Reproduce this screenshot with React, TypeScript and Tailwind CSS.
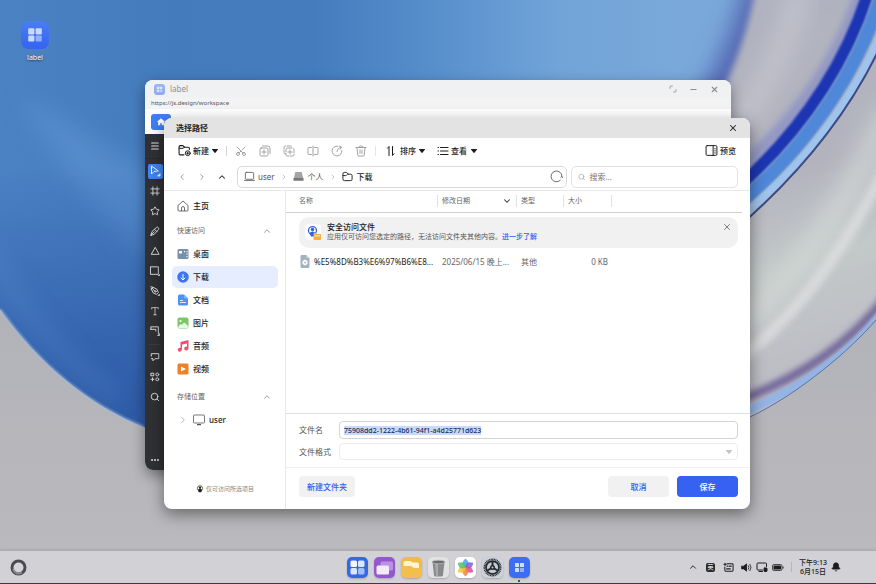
import { useEffect, useRef, type ReactNode } from "react";
import {
  Bell,
  ChevronDown,
  ChevronLeft,
  ChevronRight,
  ChevronUp,
  Ellipsis,
  Hash,
  Menu,
  Minus,
  Scissors,
  Search,
  Star,
  Triangle,
  X,
} from "lucide-react";

type GlyphProps = { children: ReactNode; className?: string };

/* Line icon on a 24 unit grid */
function Line({ children, className = "size-3" }: GlyphProps) {
  return (
    <svg
      viewBox="0 0 24 24"
      fill="none"
      stroke="currentColor"
      strokeWidth="1.8"
      strokeLinecap="round"
      strokeLinejoin="round"
      className={`shrink-0 ${className}`}
      aria-hidden="true"
    >
      {children}
    </svg>
  );
}

function Caret({ className = "text-[#1c1c1c]" }: { className?: string }) {
  return (
    <svg viewBox="0 0 12 8" className={`h-1 w-1.5 shrink-0 ${className}`} aria-hidden="true">
      <path d="M1 0h10c1 0 1.200.8.7 1.500L6.800 7.400c-.5.6-1.100.6-1.600 0L.3 1.500C-.2.8 0 0 1 0z" fill="currentColor" />
    </svg>
  );
}

function FourSquares({ className }: { className: string }) {
  return (
    <svg viewBox="0 0 28 28" className={className} aria-hidden="true">
      <defs>
        <linearGradient id="tile" x1="0" y1="0" x2="0" y2="1">
          <stop offset="0" stopColor="#4a7ef2" />
          <stop offset="1" stopColor="#3463f2" />
        </linearGradient>
      </defs>
      <rect width="28" height="28" rx="7.500" fill="url(#tile)" />
      <rect x="7.200" y="7.200" width="6.200" height="6.200" rx="1" fill="#c9dafd" />
      <rect x="14.600" y="7.200" width="6.200" height="6.200" rx="1" fill="#c9dafd" />
      <rect x="7.200" y="14.400" width="6.200" height="6.200" rx="1" fill="#c9dafd" />
      <rect x="14.600" y="14.400" width="6.200" height="6.200" rx="1" fill="#8fb0fa" />
    </svg>
  );
}

function Wallpaper() {
  return (
    <svg
      viewBox="0 0 876 584"
      preserveAspectRatio="none"
      className="absolute inset-0 size-full"
      aria-hidden="true"
    >
      <defs>
        <linearGradient id="floor" x1="0" y1="0" x2="0" y2="1">
          <stop offset="0.55" stopColor="#b2b3b9" />
          <stop offset="1" stopColor="#bbbabd" />
        </linearGradient>
        <linearGradient id="disc" x1="0" y1="0" x2="1" y2="0">
          <stop offset="0" stopColor="#4b82c4" />
          <stop offset="0.2" stopColor="#447bbc" />
          <stop offset="0.36" stopColor="#447cbe" />
          <stop offset="0.5" stopColor="#5890cd" />
          <stop offset="0.64" stopColor="#72a4d8" />
          <stop offset="0.78" stopColor="#7aa8da" />
        </linearGradient>
        <linearGradient id="shade" x1="0" y1="0" x2="0" y2="1">
          <stop offset="0" stopColor="#274fa4" stopOpacity="0" />
          <stop offset="0.75" stopColor="#27509f" stopOpacity="0.75" />
          <stop offset="1" stopColor="#27509f" stopOpacity="0.85" />
        </linearGradient>
        <linearGradient id="silver" gradientUnits="userSpaceOnUse" x1="740" y1="0" x2="850" y2="380">
          <stop offset="0" stopColor="#b0b3bf" />
          <stop offset="0.45" stopColor="#b3b3be" />
          <stop offset="0.68" stopColor="#c3c8c8" />
          <stop offset="1" stopColor="#bcbbc4" />
        </linearGradient>
        <clipPath id="discClip">
          <path d="M0 309C40 365 90 405 144 427L300 480H600L750 417C800 393 850 350 876 320V0H0Z" />
        </clipPath>
        <filter id="soft3" x="-20%" y="-20%" width="140%" height="140%">
          <feGaussianBlur stdDeviation="3" />
        </filter>
        <filter id="soft12" x="-30%" y="-30%" width="160%" height="160%">
          <feGaussianBlur stdDeviation="11" />
        </filter>
        <filter id="soft1" x="-10%" y="-10%" width="120%" height="120%">
          <feGaussianBlur stdDeviation="1" />
        </filter>
      </defs>
      <rect width="876" height="584" fill="url(#floor)" />
      <g clipPath="url(#discClip)">
        <rect width="876" height="584" fill="url(#disc)" />
        <path d="M20 100C60 170 110 230 160 270V180C110 150 60 110 20 100Z" fill="#6097d6" opacity="0.5" filter="url(#soft12)" />
        <rect y="170" width="500" height="310" fill="url(#shade)" />
        <path d="M-10 250C20 310 60 360 120 400" stroke="#5f93d6" strokeWidth="14" fill="none" opacity="0.35" filter="url(#soft12)" />
        <path d="M745 -20C735 30 712 80 670 140L750 440L900 330V-20Z" fill="#5466b2" filter="url(#soft12)" />
        <path d="M757 -20C747 40 727 90 700 130V480H900V-20Z" fill="url(#silver)" filter="url(#soft3)" />
        <path d="M800 -10C790 40 765 90 735 130" stroke="#c6c6d0" strokeWidth="22" fill="none" opacity="0.8" filter="url(#soft12)" />
        <path d="M740 325C800 275 850 200 890 110" stroke="#d6dcd8" strokeWidth="24" fill="none" opacity="0.7" filter="url(#soft12)" />
        <path d="M740 358C800 315 850 240 890 160" stroke="#e6e6e6" strokeWidth="12" fill="none" opacity="0.6" filter="url(#soft3)" />
        <path d="M862 -10C844 50 803 116 735 174" stroke="#7f86c8" strokeWidth="14" fill="none" opacity="0.6" filter="url(#soft3)" />
        <path d="M869 -10C851 50 811 124 735 190" stroke="#1d35b2" strokeWidth="12" fill="none" filter="url(#soft1)" />
        <path d="M883 -10C864 55 819 138 735 207" stroke="#4f88d8" strokeWidth="14" fill="none" filter="url(#soft1)" />
        <path d="M893 2C870 70 825 148 735 222" stroke="#9dc5f0" strokeWidth="7" fill="none" filter="url(#soft1)" />
        <path d="M897 6C873 74 828 150 735 230" stroke="#3a4a88" strokeWidth="2" fill="none" />
        <path d="M890 292C850 345 800 378 735 402" stroke="#6c5f97" strokeWidth="8" fill="none" filter="url(#soft3)" />
        <path d="M886 308C850 356 800 388 740 414" stroke="#93b4e4" strokeWidth="8" fill="none" filter="url(#soft1)" />
      </g>
      <path d="M0 309C40 365 90 405 144 427" stroke="#9dbbe0" strokeWidth="2" fill="none" opacity="0.8" filter="url(#soft1)" />
      <path d="M750 417C800 393 850 350 876 320" stroke="#5b74a8" strokeWidth="1" fill="none" />
    </svg>
  );
}

function RailButton({ label, active, children }: { label: string; active?: boolean; children: ReactNode }) {
  return (
    <button
      type="button"
      aria-label={label}
      className="flex h-5 w-5 shrink-0 items-center justify-center text-[#e6e6e6]"
    >
      <span
        className={`flex size-[15px] items-center justify-center rounded-[2px] ${active ? "bg-[#3f86f5] text-white" : ""}`}
      >
        {children}
      </span>
    </button>
  );
}

function EditorWindow() {
  return (
    <section className="absolute top-20 left-[145px] flex h-[390px] w-[586px] flex-col overflow-hidden rounded-lg bg-white shadow-[0_5px_14px_rgba(0,0,0,0.4)]">
      <header className="flex h-[18px] shrink-0 items-center bg-[#f0f1f3] pr-3 pl-[9px] text-[#8e8e90]">
        <FourSquares className="mr-[5px] size-[11px] opacity-50" />
        <span className="flex-1 text-[8px] leading-[10px]">label</span>
        <button type="button" aria-label="还原" className="mr-3">
          <Line className="size-2">
            <path d="M3 10V6q0-3 3-3h4M21 14v4q0 3-3 3h-4" strokeWidth="2.500" />
          </Line>
        </button>
        <button type="button" aria-label="最小化" className="mr-3">
          <Minus className="size-[9px]" strokeWidth={3} />
        </button>
        <button type="button" aria-label="关闭">
          <X className="size-[9px]" strokeWidth={3} />
        </button>
      </header>
      <p className="h-[11px] shrink-0 bg-[#f3f3f3] pl-1.5 text-[6px] leading-[11px] text-[#555]">
        https://js.design/workspace
      </p>
      <div className="h-[25px] shrink-0 px-1.5 py-[5px]">
        <button
          type="button"
          aria-label="首页"
          className="flex h-4 w-5 items-center justify-center rounded-[3px] bg-[#3f7dfb]"
        >
          <svg viewBox="0 0 24 24" className="size-2.5" aria-hidden="true">
            <path d="M12 3L2 12h3v8h5v-5h4v5h5v-8h3z" fill="#fff" />
          </svg>
        </button>
      </div>
      <nav aria-label="工具" className="flex w-5 flex-1 flex-col items-center bg-[#303134] pt-0.5">
        <RailButton label="菜单"><Menu className="size-2.5" strokeWidth={2.500} /></RailButton>
        <hr className="mt-0.5 mb-0.5 w-full border-[#292a2c]" />
        <RailButton label="选择" active>
          <Line className="size-3">
            <path d="M5 3v15l5-5 8-1z" />
            <path d="M18 22h4v-4z" fill="currentColor" />
          </Line>
        </RailButton>
        <RailButton label="画板">
          <Line className="size-2.5"><path d="M7 2v20M17 2v20M2 7h20M2 17h20" strokeWidth="2" /></Line>
        </RailButton>
        <RailButton label="组件"><Star className="size-2.5" strokeWidth={2.200} /></RailButton>
        <RailButton label="画笔">
          <Line className="size-2.5">
            <path d="M2 22l3-9L15 4q3-3 5 0t0 5L11 19zM11 8l6 6M2 22l8-8" strokeWidth="2.200" />
          </Line>
        </RailButton>
        <RailButton label="三角形">
          <Line className="size-2.5"><path d="M12 4L3 20h18z" strokeWidth="2.200" strokeLinejoin="miter" /></Line>
        </RailButton>
        <RailButton label="矩形">
          <Line className="size-2.5">
            <rect x="2" y="2" width="18" height="18" strokeWidth="2.200" />
            <path d="M20 24h3v-3z" fill="currentColor" />
          </Line>
        </RailButton>
        <RailButton label="钢笔">
          <Line className="size-2.5">
            <path d="M2 2l5 1M3 7l4-4 10 5 3 8-4 4-8-3L3 7M5 5l7 8" strokeWidth="2.200" />
            <circle cx="13" cy="13" r="2" />
            <path d="M20 23h3v-3z" fill="currentColor" />
          </Line>
        </RailButton>
        <RailButton label="文本">
          <Line className="size-2.5"><path d="M4 7V4h16v3M12 4v17M9 21h6" /></Line>
        </RailButton>
        <RailButton label="切片">
          <Line className="size-2.5">
            <path d="M2 8V2h18v16M2 8h12v4" strokeWidth="2.200" />
            <path d="M19 23h4v-4z" fill="currentColor" />
          </Line>
        </RailButton>
        <hr className="mt-[3px] mb-0.5 w-3 border-[#3c3d40]" />
        <RailButton label="评论">
          <Line className="size-2.5"><path d="M3 10V4h18v12h-9l-5 5v-5H3" strokeWidth="2.200" /></Line>
        </RailButton>
        <RailButton label="插件">
          <Line className="size-2.5">
            <path d="M3 3h6v6H3zM6 14v7M2.500 17.500h7" strokeWidth="2.200" />
            <circle cx="17.500" cy="6" r="3.500" strokeWidth="2.200" />
            <circle cx="17.500" cy="17.500" r="3.500" strokeWidth="2.200" />
          </Line>
        </RailButton>
        <RailButton label="查找"><Search className="size-2.5" strokeWidth={2.200} /></RailButton>
        <div className="mt-auto">
          <RailButton label="更多"><Ellipsis className="size-2.5" strokeWidth={3} /></RailButton>
        </div>
      </nav>
    </section>
  );
}

function ToolIcon({ label, children }: { label: string; children: ReactNode }) {
  return (
    <button type="button" aria-label={label} className="flex w-3 items-center justify-center text-[#999]">
      {children}
    </button>
  );
}

function Toolbar() {
  return (
    <div className="flex h-[25px] items-center px-3.5 text-[8px] leading-[10px] font-medium text-[#1c1c1c]">
      <button type="button" className="flex items-center">
        <Line className="mr-0.5 size-[13px]">
          <path d="M11 20H4q-2 0-2-2V5q0-2 2-2h5l3 3h7q2 0 2 2v2" strokeWidth="2" />
          <path d="M2 8h7l3-2" />
          <circle cx="18" cy="17" r="4.500" />
          <path d="M18 15v4M16 17h4" />
        </Line>
        新建
        <Caret className="ml-[3px]" />
      </button>
      <span className="mx-2 h-2.5 w-px bg-[#d4d4d4]" />
      <div className="flex items-center gap-3">
        <ToolIcon label="剪切"><Scissors className="size-3 -rotate-90" strokeWidth={1.800} /></ToolIcon>
        <ToolIcon label="复制">
          <Line>
            <rect x="2" y="6" width="16" height="16" rx="2.500" />
            <path d="M7 2h11q4 0 4 4v11M10 10v8M6 14h8" />
          </Line>
        </ToolIcon>
        <ToolIcon label="粘贴">
          <Line>
            <path d="M5 18q-3 0-3-3V5q0-3 3-3h10q3 0 3 3" strokeDasharray="8 3" />
            <rect x="6" y="6" width="16" height="16" rx="3" strokeDasharray="9 3" />
            <path d="M14 10v8M10 14h8" />
          </Line>
        </ToolIcon>
        <ToolIcon label="重命名">
          <Line><path d="M9 5H3.500Q2 5 2 7v10q0 2 1.500 2H9M15 5h5.500Q22 5 22 7v10q0 2-1.500 2H15M12 2v20" /></Line>
        </ToolIcon>
        <ToolIcon label="分享">
          <Line><path d="M14 2.400A9.800 9.800 0 1 0 21.800 11M12 13c1-5 4-8 8-8.500M17 2l4 2.500-2.500 4" /></Line>
        </ToolIcon>
        <ToolIcon label="删除">
          <Line><path d="M2 5h20M8 5q0-3 2-3h4q2 0 2 3M4 5l1.500 15q.2 2 2 2h9q1.800 0 2-2L20 5M10 10v7M14 10v7" /></Line>
        </ToolIcon>
      </div>
      <span className="mx-2 h-2.5 w-px bg-[#e6e6e6]" />
      <button type="button" className="mr-3 flex items-center">
        <Line className="mr-[3px] ml-px size-3">
          <path d="M8 21V3L5 6.500M15 3v18l3-3.500" strokeWidth="2" />
        </Line>
        排序
        <Caret className="ml-[3px]" />
      </button>
      <button type="button" className="flex items-center">
        <Line className="mr-0.5 size-3">
          <path d="M7 5h15M7 12h15M7 19h15M2 5h1M2 12h1M2 19h1" strokeWidth="2" />
        </Line>
        查看
        <Caret className="ml-1" />
      </button>
      <button type="button" className="ml-auto flex items-center">
        <Line className="mr-0.5 size-[13px]">
          <rect x="2" y="3" width="20" height="18" rx="2" />
          <path d="M15 3v18M18.500 8v1M18.500 12v1M18.500 16v1" />
        </Line>
        预览
      </button>
    </div>
  );
}

function AddressRow() {
  return (
    <div className="flex h-[27px] items-center pr-3 pl-[13px] text-[8px] leading-[10px] text-[#555]">
      <button type="button" aria-label="后退" className="mr-2.5"><ChevronLeft className="size-2.5 text-[#8b8b8b]" strokeWidth={2} /></button>
      <button type="button" aria-label="前进" className="mr-2.5"><ChevronRight className="size-2.5 text-[#8b8b8b]" strokeWidth={2} /></button>
      <button type="button" aria-label="上一级" className="mr-2.5"><ChevronUp className="size-2.5 text-[#222]" strokeWidth={2.500} /></button>
      <div className="mr-1 flex h-[22px] flex-1 items-center rounded-[5px] border border-[#d9d9d9] pr-[3px] pl-1.5">
        <button type="button" className="flex items-center gap-[3px]">
          <Line className="size-[11px]">
            <rect x="3" y="3" width="18" height="15" rx="2" />
            <path d="M1 20.500h22" />
          </Line>
          user
        </button>
        <ChevronRight className="mx-[5px] size-2 text-[#aaa]" strokeWidth={2} />
        <button type="button" className="flex items-center gap-1">
          <svg viewBox="0 0 24 24" className="size-[11px]" aria-hidden="true">
            <path d="M5 2h14l3 13H2z" fill="#a4a4a4" />
            <path d="M1 15h22v5q0 1-1 1H2q-1 0-1-1z" fill="#777" />
          </svg>
          个人
        </button>
        <ChevronRight className="mx-[5px] size-2 text-[#aaa]" strokeWidth={2} />
        <button type="button" className="flex items-center gap-1 font-medium text-[#1c1c1c]">
          <Line className="size-[11px]">
            <path d="M2 6q0-3 3-3h5l4 4h5q3 0 3 3v8q0 3-3 3H5q-3 0-3-3zM2 10h6q2 0 3-2l1-1h2" strokeWidth="2" />
          </Line>
          下载
        </button>
        <button type="button" aria-label="刷新" className="ml-auto text-[#555]">
          <Line className="size-[13px]">
            <path d="M19 19a10 10 0 1 1 3-7l-2 1.500M22 12l1.500 2" strokeWidth="1.600" />
          </Line>
        </button>
      </div>
      <label className="flex h-[22px] w-[167px] items-center rounded-[5px] border border-[#e3e3e3] px-1.5">
        <Search className="mr-1 size-2 text-[#999]" strokeWidth={2} />
        <input
          type="search"
          aria-label="搜索"
          placeholder="搜索..."
          className="w-full min-w-0 bg-transparent outline-none placeholder:text-[#777]"
        />
      </label>
    </div>
  );
}

function Place({ label, active, children }: { label: string; active?: boolean; children: ReactNode }) {
  return (
    <a
      href="#"
      className={`flex h-[22px] items-center gap-1 rounded-[5px] pl-[5px] font-medium text-[#1c1c1c] ${active ? "bg-[#e6edfe]" : ""}`}
    >
      <svg viewBox="0 0 24 24" className="size-3 shrink-0" fill="none" aria-hidden="true">
        {children}
      </svg>
      {label}
    </a>
  );
}

function GroupTitle({ children }: { children: ReactNode }) {
  return (
    <button type="button" className="flex h-[22px] items-center justify-between pr-1.5 pl-[5px] text-[7px] text-[#666]">
      {children}
      <ChevronUp className="size-2.5 text-[#888]" strokeWidth={2} />
    </button>
  );
}

function Places() {
  return (
    <nav
      aria-label="位置"
      className="flex w-[122px] shrink-0 flex-col border-r border-[#e8e8e8] pt-1 pr-[7px] pb-[15px] pl-2 text-[8px] leading-[10px]"
    >
      <Place label="主页">
        <path d="M2 11l10-9 10 9v9q0 2-2 2H4q-2 0-2-2zM9 22v-6q0-3 3-3t3 3v6" stroke="#555" strokeWidth="1.700" strokeLinejoin="round" />
      </Place>
      <div className="mt-[3px] flex flex-col gap-px">
        <GroupTitle>快速访问</GroupTitle>
        <Place label="桌面">
          <rect x="1" y="2" width="22" height="20" rx="3" fill="#7791aa" />
          <rect x="4" y="6" width="6" height="5" rx="1" fill="#fff" />
          <path d="M14 7h2M19 7h2M19 12h2M19 17h2" stroke="#fff" strokeWidth="2.500" />
        </Place>
        <Place label="下载" active>
          <circle cx="12" cy="12" r="11.500" fill="#3d73f5" />
          <path d="M12 6v12M7.500 13.500L12 18l4.500-4.500" stroke="#fff" strokeWidth="2" />
        </Place>
        <Place label="文档">
          <path d="M5 1h9l8 8v11q0 3-3 3H5q-3 0-3-3V4q0-3 3-3z" fill="#4a93f8" />
          <path d="M14 1l8 8h-5q-3 0-3-3z" fill="#82b6fb" />
          <path d="M6 13h6M6 17h12" stroke="#d9e9fe" strokeWidth="2" />
        </Place>
        <Place label="图片">
          <rect x="1" y="1" width="22" height="22" rx="4" fill="#7ac864" />
          <path d="M2 20l5-6 3 2q4-8 9-1l4 4q-1 3-4 3H5q-3 0-3-2z" fill="#fff" opacity="0.85" />
          <circle cx="7" cy="8" r="2.200" fill="#fff" />
        </Place>
        <Place label="音频">
          <path d="M8.500 19V5L21.500 2v15M8.500 8l13-3" stroke="#ec4f6c" strokeWidth="3" />
          <circle cx="5.500" cy="19.500" r="4" fill="#ec4f6c" />
          <circle cx="18.500" cy="17" r="4" fill="#ec4f6c" />
        </Place>
        <Place label="视频">
          <rect x="1" y="1" width="22" height="22" rx="3" fill="#ee8127" />
          <path d="M8 7l10 5-10 5z" fill="#fff" />
        </Place>
      </div>
      <div className="mt-1.5 flex flex-col">
        <GroupTitle>存储位置</GroupTitle>
        <div className="flex items-center pt-px pl-1.5">
          <ChevronRight className="size-2.5 text-[#999]" strokeWidth={1.800} />
          <Place label="user">
            <rect x="1" y="2" width="22" height="16" rx="2" stroke="#555" strokeWidth="1.600" />
            <path d="M8 21h8" stroke="#555" strokeWidth="2.500" />
          </Place>
        </div>
      </div>
      <p className="mt-auto flex items-center justify-center gap-0.5 text-[6px] text-[#888]">
        <svg viewBox="0 0 24 24" className="size-2" aria-hidden="true">
          <circle cx="12" cy="10" r="8" fill="none" stroke="#222" strokeWidth="2" />
          <circle cx="12" cy="8" r="3.500" fill="#222" />
          <path d="M6 14q6-5 12 0l-2 8H8z" fill="#222" />
        </svg>
        仅可访问所选项目
      </p>
    </nav>
  );
}

function FileTable() {
  return (
    <table className="w-full table-fixed text-left text-[8px] leading-[10px] text-[#666]">
      <colgroup>
        <col className="w-[152px]" />
        <col className="w-[79px]" />
        <col className="w-[47px]" />
        <col className="w-[48px]" />
        <col />
      </colgroup>
      <thead className="text-[7px]">
        <tr className="h-[21px]">
          <th className="relative border-b border-[#cfcfcf] pl-[13px] font-normal">
            名称<i className="absolute top-1 right-0 h-3 w-px bg-[#e2e2e2]" />
          </th>
          <th className="relative border-b border-[#cfcfcf] pl-1 font-normal">
            <span className="flex items-center justify-between pr-[5px]">
              修改日期
              <ChevronDown className="size-2.5 text-[#333]" strokeWidth={2.500} />
            </span>
            <i className="absolute top-1 right-0 h-3 w-px bg-[#e2e2e2]" />
          </th>
          <th className="relative border-b border-[#cfcfcf] pl-1 font-normal">
            类型<i className="absolute top-1 right-0 h-3 w-px bg-[#e2e2e2]" />
          </th>
          <th className="relative border-b border-[#cfcfcf] pl-1 font-normal">
            大小<i className="absolute top-1 right-0 h-3 w-px bg-[#e2e2e2]" />
          </th>
          <th className="border-b border-[#cfcfcf]" />
        </tr>
      </thead>
      <tbody>
        <tr>
          <td colSpan={5} className="pt-1 pr-1 pl-[13px]">
            <div className="flex h-[31px] items-start rounded-[10px] bg-[#f1f1f1] px-1.5 py-[5px]">
              <svg viewBox="0 0 32 32" className="mt-0.5 mr-1.5 size-4 shrink-0" aria-hidden="true">
                <rect width="32" height="32" rx="6" fill="#fff" />
                <circle cx="15" cy="13" r="8" fill="none" stroke="#3561e0" strokeWidth="2.500" />
                <circle cx="15" cy="11" r="3.500" fill="#3561e0" />
                <path d="M9 18q6-6 12 0l-2 7h-7z" fill="#3561e0" />
                <path d="M17 18h5l2 2h8v10q0 2-2 2H19q-2 0-2-2z" fill="#f4b13e" />
                <path d="M19 22h11v3H19z" fill="#fbdc96" />
              </svg>
              <div className="min-w-0 flex-1">
                <h2 className="font-medium text-[#1c1c1c]">安全访问文件</h2>
                <p className="text-[7px] leading-[9px] text-[#555]">
                  应用仅可访问您选定的路径，无法访问文件夹其他内容。
                  <a href="#" className="font-medium text-[#2f5fee]">进一步了解</a>
                </p>
              </div>
              <button type="button" aria-label="关闭提示"><X className="size-2.5 text-[#666]" strokeWidth={2} /></button>
            </div>
          </td>
        </tr>
        <tr className="h-7">
          <td className="pl-[13px]">
            <span className="flex items-center gap-[3px] whitespace-nowrap text-[#1c1c1c]">
              <svg viewBox="0 0 24 26" className="h-[13px] w-3 shrink-0" aria-hidden="true">
                <path d="M5 0h10l6 6v17q0 3-3 3H6q-3 0-3-3V3q0-3 2-3z" fill="#a3b2bf" />
                <path d="M15 0l6 6h-4q-2 0-2-2z" fill="#d3dbe2" />
                <path d="M12 9l5 3v6l-5 3-5-3v-6z" fill="#fff" />
                <circle cx="12" cy="15" r="1.800" fill="#a3b2bf" />
              </svg>
              %E5%8D%B3%E6%97%B6%E8...
            </span>
          </td>
          <td className="pl-1 whitespace-nowrap">2025/06/15 晚上...</td>
          <td className="pl-1">其他</td>
          <td className="pr-1 text-right whitespace-nowrap">0 KB</td>
          <td />
        </tr>
      </tbody>
    </table>
  );
}

function SaveDialog() {
  const nameRef = useRef<HTMLInputElement>(null);

  useEffect(() => {
    nameRef.current?.focus();
    nameRef.current?.select();
  }, []);

  return (
    <section
      role="dialog"
      aria-label="选择路径"
      className="absolute top-[118px] left-[164px] w-[586px] overflow-hidden rounded-lg bg-white shadow-[0_5px_16px_rgba(0,0,0,0.45)]"
    >
      <header className="flex h-5 items-center justify-between bg-[#e3e3e3] px-3">
        <h1 className="text-[8px] leading-[10px] font-bold text-[#1c1c1c]">选择路径</h1>
        <button type="button" aria-label="关闭"><X className="size-2.5 text-[#222]" strokeWidth={2.500} /></button>
      </header>
      <Toolbar />
      <AddressRow />
      <div className="flex border-t border-[#e8e8e8]">
        <Places />
        <form className="flex min-w-0 flex-1 flex-col" onSubmit={(event) => event.preventDefault()}>
          <div className="h-[222px] pr-2">
            <FileTable />
          </div>
          <div className="grid grid-cols-[40px_1fr] items-center gap-y-1 border-t border-[#dedede] py-[7px] pr-3 pl-[13px] text-[8px] leading-[10px] text-[#555]">
            <label htmlFor="file-name">文件名</label>
            <input
              id="file-name"
              ref={nameRef}
              defaultValue="75908dd2-1222-4b61-94f1-a4d25771d623"
              className="h-[18px] w-full rounded-[4px] border border-[#d3d3d3] px-1 text-[7px] leading-2 font-medium text-[#1c2a55] outline-none selection:bg-[#c9d9fb] selection:text-[#1c2a55]"
            />
            <label htmlFor="file-type">文件格式</label>
            <div className="relative">
              <select
                id="file-type"
                className="block h-[17px] w-full appearance-none rounded-[4px] border border-[#ececec] bg-white px-1 text-[7px] outline-none"
              />
              <Caret className="pointer-events-none absolute top-1/2 right-1.5 -translate-y-1/2 text-[#c4c4c4]" />
            </div>
          </div>
          <footer className="flex items-center border-t border-[#f0f0f0] pt-2 pr-3 pb-3 pl-[13px] text-[8px] leading-[10px] font-medium">
            <button type="button" className="h-[21px] w-14 rounded-[4px] bg-[#f1f1f1] text-[#2f5fee]">新建文件夹</button>
            <button type="button" className="mr-2 ml-auto h-[21px] w-[61px] rounded-[4px] bg-[#f1f1f1] text-[#2f5fee]">取消</button>
            <button type="submit" className="h-[21px] w-[61px] rounded-[4px] bg-[#3761f0] text-white">保存</button>
          </footer>
        </form>
      </div>
    </section>
  );
}

function DockIcon({ label, running, children }: { label: string; running?: boolean; children: ReactNode }) {
  return (
    <button
      type="button"
      aria-label={label}
      className="relative block rounded-[5px] shadow-[0_1px_2px_rgba(0,0,0,0.2)]"
    >
      <svg viewBox="0 0 42 42" className="block size-[21px]" aria-hidden="true">
        {children}
      </svg>
      {running && <span className="absolute -bottom-1 left-1/2 size-0.5 -translate-x-1/2 rounded-full bg-[#222]" />}
    </button>
  );
}

const PETALS = [
  { angle: 0, color: "#4aa3e8" },
  { angle: 60, color: "#7b5fe0" },
  { angle: 120, color: "#e2479b" },
  { angle: 180, color: "#f0823a" },
  { angle: 240, color: "#f4c235" },
  { angle: 300, color: "#58c06c" },
];

const SPOKES = [0, 120, 240];

function Taskbar() {
  return (
    <footer className="relative grid h-[33px] grid-cols-[1fr_auto_1fr] items-center border-b border-[#3c3c3e] bg-[#d2d1d6] shadow-[0_-1px_3px_rgba(0,0,0,0.12)]">
      <button type="button" aria-label="启动器" className="ml-2.5 size-[17px] justify-self-start">
        <svg viewBox="0 0 34 34" aria-hidden="true">
          <circle cx="17" cy="17" r="13" fill="#d6d5da" stroke="#4a4b50" strokeWidth="6" />
          <path d="M6 20a12 12 0 0 0 18 7" stroke="#8b8c92" strokeWidth="4" fill="none" />
        </svg>
      </button>
      <div className="flex items-center gap-1.5">
        <DockIcon label="启动台">
          <rect width="42" height="42" rx="10" fill="#3667e6" />
          <rect x="7" y="7" width="13" height="13" rx="3" fill="#f2f7ff" />
          <rect x="22" y="7" width="13" height="13" rx="3" fill="#dbe8ff" />
          <rect x="7" y="22" width="13" height="13" rx="3" fill="#dbe8ff" />
          <rect x="22" y="22" width="13" height="13" rx="3" fill="#9fc0fb" />
        </DockIcon>
        <DockIcon label="多任务">
          <rect width="42" height="42" rx="10" fill="#9458cc" />
          <rect x="13" y="9" width="25" height="18" rx="3" fill="#bb91e4" />
          <rect x="5" y="17" width="25" height="18" rx="3" fill="#f3eafc" />
        </DockIcon>
        <DockIcon label="文件管理">
          <rect width="42" height="42" rx="10" fill="#f0bb45" />
          <path d="M5 12q0-4 4-4h10l4 3h9q4 0 4 4v9H5z" fill="#fff3d4" />
          <path d="M1 18h17q4 0 5 2 1 2 5 2h13v11q0 8-9 8H10q-9 0-9-8z" fill="#f3bf4c" />
        </DockIcon>
        <DockIcon label="回收站">
          <rect width="42" height="42" rx="10" fill="#e2e2e2" />
          <path d="M9 10h24l-3 26q0 3-4 3H16q-4 0-4-3z" fill="#88898a" />
          <path d="M14 12h6v26h-4z" fill="#a9aaab" />
          <ellipse cx="21" cy="10" rx="13" ry="3.500" fill="#6b6c6d" stroke="#b9b9b9" strokeWidth="1.500" />
        </DockIcon>
        <DockIcon label="图库">
          <rect width="42" height="42" rx="10" fill="#fff" />
          {PETALS.map((petal) => (
            <path
              key={petal.angle}
              d="M21 22c-8-6-8-12 0-19c8 7 8 13 0 19z"
              fill={petal.color}
              opacity="0.85"
              transform={`rotate(${petal.angle} 21 21)`}
            />
          ))}
        </DockIcon>
        <DockIcon label="设置">
          <rect width="42" height="42" rx="10" fill="#ccd1d8" />
          <circle cx="21" cy="21" r="16.500" fill="none" stroke="#22272e" strokeWidth="3" strokeDasharray="2 1.200" />
          <circle cx="21" cy="21" r="13" fill="#c5cad1" stroke="#22272e" strokeWidth="3.500" />
          {SPOKES.map((angle) => (
            <path key={angle} d="M21 21V9" stroke="#22272e" strokeWidth="4" transform={`rotate(${angle} 21 21)`} />
          ))}
          <circle cx="21" cy="21" r="5" fill="#22272e" />
          <circle cx="21" cy="21" r="2" fill="#c5cad1" />
        </DockIcon>
        <DockIcon label="label" running>
          <rect width="42" height="42" rx="10" fill="#3c6df2" />
          <rect x="12" y="12" width="8" height="8" rx="1" fill="#cfdefd" />
          <rect x="22" y="12" width="8" height="8" rx="1" fill="#cfdefd" />
          <rect x="12" y="22" width="8" height="8" rx="1" fill="#cfdefd" />
          <rect x="22" y="22" width="8" height="8" rx="1" fill="#8fb0fa" />
        </DockIcon>
      </div>
      <div className="flex items-center justify-self-end pr-[35px] text-[#1c1c1c]">
        <ChevronUp className="mr-2 size-2.5" strokeWidth={2.200} />
        <span className="mr-2 flex size-[9px] items-center justify-center rounded-[2px] bg-[#2a2a2a] text-[6px] leading-[9px] text-white">英</span>
        <Line className="mr-[7px] size-[11px]">
          <path d="M9 4h11q2 0 2 2v12q0 2-2 2H6q-2 0-2-2v-7M2 5h5M4.500 2.500v5M9 9h2M14 9h4M8 15h8" strokeWidth="2.200" />
        </Line>
        <Line className="mr-1 size-[11px]">
          <path d="M2 9h4l6-5v16l-6-5H2z" fill="currentColor" />
          <path d="M16 8q3 4 0 8M19.500 5q5 7 0 14" />
        </Line>
        <Line className="mr-1 size-3">
          <path d="M13 18H4q-2 0-2-2V6q0-2 2-2h15q2 0 2 2v5M6 21h7" strokeWidth="2" />
          <rect x="16" y="14" width="6" height="7" rx="1" fill="currentColor" />
        </Line>
        <svg viewBox="0 0 24 14" className="mr-[7px] h-[7px] w-3" aria-hidden="true">
          <rect x="1" y="1" width="19" height="12" rx="3" fill="none" stroke="currentColor" strokeWidth="1.500" />
          <rect x="3" y="3" width="15" height="8" rx="1" fill="currentColor" />
          <path d="M22 5v4" stroke="currentColor" strokeWidth="2" />
        </svg>
        <span className="mr-[7px] h-2.5 w-px bg-[#b5b5ba]" />
        <time className="mr-1 block text-center text-[7px] leading-[9px] font-medium">
          下午9:13
          <br />
          6月15日
        </time>
        <Bell className="size-2.5" fill="currentColor" strokeWidth={2} />
      </div>
    </footer>
  );
}

export default function App() {
  return (
    <div
      lang="zh-CN"
      className="relative flex min-h-screen flex-col overflow-hidden bg-[#b5b5ba] [font-family:'Noto_Sans','Noto_Sans_CJK_SC',sans-serif]"
    >
      <Wallpaper />
      <main className="relative min-h-[520px] flex-1">
        <button type="button" className="absolute top-[21px] left-[21px] flex w-7 flex-col items-center gap-1 text-[7px] leading-[10px] text-white [text-shadow:0_1px_2px_rgba(0,0,0,0.7)]">
          <FourSquares className="size-7" />
          label
        </button>
        <EditorWindow />
        <SaveDialog />
      </main>
      <Taskbar />
    </div>
  );
}
